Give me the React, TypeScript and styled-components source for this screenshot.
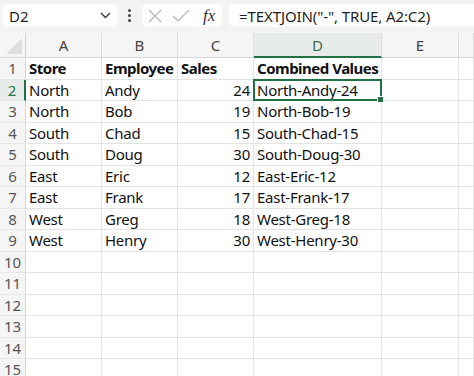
import React from 'react'
import styled, { createGlobalStyle } from 'styled-components'

const GlobalStyle = createGlobalStyle`
  html, body {
    margin: 0;
    padding: 0;
    background: #ffffff;
    overflow: hidden;
  }
  body {
    font-family: 'Noto Sans', 'Open Sans', sans-serif;
  }
`

const GREEN = '#217346'
const LINE = '#e3e3e3'

const Sheet = styled.div`
  width: 474px;
  height: 376px;
  overflow: hidden;
  background: #fff;
`

const Toolbar = styled.div`
  height: 33px;
  background: #f3f3f3;
  display: flex;
  align-items: flex-start;
  padding: 4px 0 0 3px;
  box-sizing: border-box;
`

const NameBox = styled.div`
  width: 114px;
  height: 23px;
  background: #fff;
  border-radius: 5px;
  display: flex;
  align-items: center;
  justify-content: space-between;
  padding: 0 6px;
  box-sizing: border-box;
  font-size: 15px;
  color: #1f1f1f;
`

const Grip = styled.div`
  width: 25px;
  height: 23px;
  display: flex;
  flex-direction: column;
  align-items: center;
  justify-content: center;
  gap: 2px;
  span {
    width: 3px;
    height: 3px;
    border-radius: 50%;
    background: #444;
  }
`

const FxBox = styled.div`
  width: 80px;
  height: 23px;
  background: #fff;
  border-radius: 5px;
  display: flex;
  align-items: center;
  gap: 9px;
  padding-left: 5px;
  box-sizing: border-box;
`

const FxLabel = styled.span`
  font-family: 'Liberation Serif', serif;
  font-style: italic;
  font-size: 17px;
  color: #333;
  margin-left: 4px;
`

const FormulaBox = styled.div`
  flex: 1;
  margin-left: 7px;
  height: 23px;
  background: #fff;
  border-radius: 5px 0 0 5px;
  display: flex;
  align-items: center;
  padding-left: 10px;
  font-size: 15px;
  color: #1f1f1f;
  white-space: nowrap;
  letter-spacing: -0.1px;
`

const Grid = styled.div`
  display: grid;
  grid-template-columns: 26px 76px 76px 76px 128px 77px 1fr;
  grid-template-rows: 25px;
  grid-auto-rows: 21.5px;
`

const ColHead = styled.div<{ $active?: boolean }>`
  background: ${(p) => (p.$active ? '#e8ece9' : '#f5f5f5')};
  border-right: 1px solid #dcdcdc;
  border-bottom: ${(p) => (p.$active ? `2px solid ${GREEN}` : '1px solid #d6d6d6')};
  display: flex;
  align-items: center;
  justify-content: center;
  font-size: 15px;
  color: ${(p) => (p.$active ? '#3d6b50' : '#444')};
  box-sizing: border-box;
`

const Corner = styled.div`
  background: #f5f5f5;
  border-right: 1px solid #d6d6d6;
  border-bottom: 1px solid #d6d6d6;
  position: relative;
  box-sizing: border-box;
`

const CornerMark = styled.div`
  position: absolute;
  right: 3px;
  bottom: 3px;
  width: 0;
  height: 0;
  border-left: 16px solid transparent;
  border-bottom: 16px solid #dedede;
`

const RowHead = styled.div<{ $active?: boolean }>`
  background: ${(p) => (p.$active ? '#e8ece9' : '#f5f5f5')};
  border-right: ${(p) => (p.$active ? `2px solid ${GREEN}` : '1px solid #d6d6d6')};
  border-bottom: 1px solid #e6e6e6;
  display: flex;
  align-items: center;
  justify-content: center;
  font-size: 15px;
  color: ${(p) => (p.$active ? GREEN : '#555')};
  box-sizing: border-box;
`

const Cell = styled.div<{ $bold?: boolean; $num?: boolean }>`
  position: relative;
  border-right: 1px solid ${LINE};
  border-bottom: 1px solid ${LINE};
  box-sizing: border-box;
  display: flex;
  align-items: center;
  justify-content: ${(p) => (p.$num ? 'flex-end' : 'flex-start')};
  padding: 0 3px;
  font-size: 15px;
  font-weight: ${(p) => (p.$bold ? 700 : 400)};
  letter-spacing: ${(p) => (p.$bold ? '-0.5px' : '-0.25px')};
  color: #111;
  white-space: nowrap;
`

const Selection = styled.div`
  position: absolute;
  left: -1px;
  top: -1px;
  right: -1px;
  bottom: -1px;
  border: 2px solid ${GREEN};
  pointer-events: none;
  z-index: 2;
`

const Handle = styled.div`
  position: absolute;
  right: -4px;
  bottom: -4px;
  width: 5px;
  height: 5px;
  background: ${GREEN};
  border: 1px solid #fff;
`

const Chevron = () => (
  <svg width="11" height="7" viewBox="0 0 11 7">
    <path d="M1 1l4.5 4.5L10 1" fill="none" stroke="#333" strokeWidth="1.3" />
  </svg>
)

const CancelIcon = () => (
  <svg width="16" height="16" viewBox="0 0 16 16">
    <path d="M2 2l12 12M14 2L2 14" stroke="#b5b5b5" strokeWidth="1.2" />
  </svg>
)

const CheckIcon = () => (
  <svg width="18" height="14" viewBox="0 0 18 14">
    <path d="M1 7l5 5L17 1" fill="none" stroke="#b5b5b5" strokeWidth="1.2" />
  </svg>
)

const rows: [string, string, string, string][] = [
  ['North', 'Andy', '24', 'North-Andy-24'],
  ['North', 'Bob', '19', 'North-Bob-19'],
  ['South', 'Chad', '15', 'South-Chad-15'],
  ['South', 'Doug', '30', 'South-Doug-30'],
  ['East', 'Eric', '12', 'East-Eric-12'],
  ['East', 'Frank', '17', 'East-Frank-17'],
  ['West', 'Greg', '18', 'West-Greg-18'],
  ['West', 'Henry', '30', 'West-Henry-30'],
]

const cols = ['A', 'B', 'C', 'D', 'E', 'F']

const App: React.FC = () => {
  const blanks = [10, 11, 12, 13, 14, 15]
  return (
    <Sheet>
      <GlobalStyle />
      <Toolbar>
        <NameBox>
          D2
          <Chevron />
        </NameBox>
        <Grip>
          <span />
          <span />
          <span />
        </Grip>
        <FxBox>
          <CancelIcon />
          <CheckIcon />
          <FxLabel>fx</FxLabel>
        </FxBox>
        <FormulaBox>=TEXTJOIN("-", TRUE, A2:C2)</FormulaBox>
      </Toolbar>
      <Grid>
        <Corner>
          <CornerMark />
        </Corner>
        {cols.map((c) => (
          <ColHead key={c} $active={c === 'D'}>
            {c === 'F' ? '' : c}
          </ColHead>
        ))}

        <RowHead>1</RowHead>
        <Cell $bold>Store</Cell>
        <Cell $bold>Employee</Cell>
        <Cell $bold>Sales</Cell>
        <Cell $bold>Combined Values</Cell>
        <Cell />
        <Cell />

        {rows.map((r, i) => (
          <React.Fragment key={i}>
            <RowHead $active={i === 0}>{i + 2}</RowHead>
            <Cell>{r[0]}</Cell>
            <Cell>{r[1]}</Cell>
            <Cell $num>{r[2]}</Cell>
            <Cell>
              {r[3]}
              {i === 0 && (
                <Selection>
                  <Handle />
                </Selection>
              )}
            </Cell>
            <Cell />
            <Cell />
          </React.Fragment>
        ))}

        {blanks.map((n) => (
          <React.Fragment key={n}>
            <RowHead>{n}</RowHead>
            <Cell />
            <Cell />
            <Cell />
            <Cell />
            <Cell />
            <Cell />
          </React.Fragment>
        ))}
      </Grid>
    </Sheet>
  )
}

export default App
